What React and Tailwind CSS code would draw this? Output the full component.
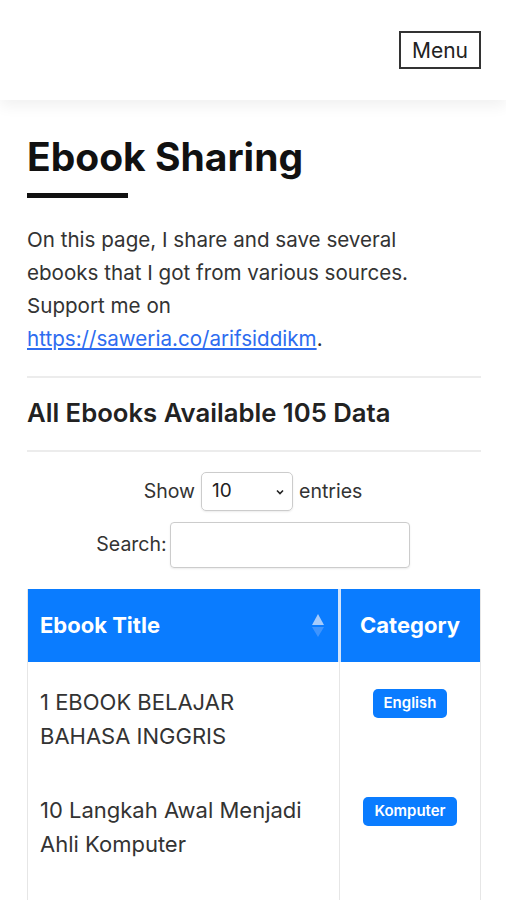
import React from "react";

const books = [
  { title: "1 EBOOK BELAJAR BAHASA INGGRIS", category: "English" },
  { title: "10 Langkah Awal Menjadi Ahli Komputer", category: "Komputer" },
];

const App = () => {
  return (
    <div className="h-screen overflow-hidden flex flex-col bg-white text-[#222] font-['Inter','Liberation_Sans',sans-serif]">
      <header className="h-[100px] shrink-0 flex items-center justify-end px-[25px] shadow-[0_6px_14px_rgba(0,0,0,0.06)]">
        <button className="border-2 border-[#333] px-[11px] h-[38px] text-[21px] text-[#222] leading-none">
          Menu
        </button>
      </header>

      <main className="flex-1 flex flex-col pl-[27px] pr-[25px] pt-[33px]">
        <h1 className="text-[39px] font-bold text-[#111] leading-[47px]">
          Ebook Sharing
        </h1>
        <div className="w-[101px] h-[5px] bg-[#111] mt-[13px]"></div>

        <p className="mt-[25px] max-w-[430px] text-[20.6px] leading-[33px] text-[#333]">
          On this page, I share and save several ebooks that I got from various
          sources. Support me on{" "}
          <a href="#" className="text-[#2d6cf0] underline">
            https://saweria.co/arifsiddikm
          </a>
          .
        </p>

        <hr className="mt-[21px] border-t-2 border-[#ececec]" />
        <h2 className="text-[25.7px] font-semibold text-[#222] pt-[22px] pb-[24px] leading-[26px]">
          All Ebooks Available 105 Data
        </h2>
        <hr className="border-t-2 border-[#ececec]" />

        <div className="flex flex-col items-center mt-[20px] text-[19.5px] text-[#333]">
          <label className="flex items-center gap-[6px] pr-[2px]">
            Show
            <span className="relative flex items-center w-[92px] h-[39px] border border-[#ccc] rounded-[5px] px-[10px] text-[19px] text-[#222] shadow-[0_1px_2px_rgba(0,0,0,0.08)]">
              10
              <svg className="absolute right-[7px]" width="10" height="10" viewBox="0 0 10 10">
                <path d="M2 3.5 L5 6.5 L8 3.5" fill="none" stroke="#222" strokeWidth="1.6" />
              </svg>
            </span>
            entries
          </label>
          <label className="flex items-center gap-[3px] mt-[11px] pr-[2px]">
            Search:
            <span className="block w-[240px] h-[46px] border border-[#ccc] rounded-[4px] shadow-[0_1px_2px_rgba(0,0,0,0.08)]"></span>
          </label>
        </div>

        <div className="mt-[21px] flex-1 flex flex-col border-l border-r border-[#e6e6e6]">
          <div className="flex h-[73px] bg-[#0a7cff]">
            <div className="w-[310px] flex items-center justify-between pl-[12px] pr-[14px]">
              <span className="text-[22px] font-bold text-white">Ebook Title</span>
              <svg width="12" height="28" viewBox="0 0 12 28">
                <path d="M6 2 L12 13 L0 13 Z" fill="#a6cbfb" />
                <path d="M6 25 L12 15 L0 15 Z" fill="#3f94fd" />
              </svg>
            </div>
            <div className="w-[3px] bg-[#d3e4fb]"></div>
            <div className="flex-1 flex items-center pl-[19px] overflow-hidden">
              <span className="text-[22px] font-bold text-white whitespace-nowrap">Category</span>
            </div>
          </div>
          {books.map((b) => (
            <div key={b.title} className="flex">
              <div className="w-[312px] border-r border-[#e6e6e6] pl-[12px] pr-[20px] pt-[23px] pb-[17px] text-[22px] leading-[34px] text-[#333]">
                {b.title}
              </div>
              <div className="flex-1 flex justify-center items-start pt-[27px]">
                <span className="h-[29px] px-[11px] rounded-[5px] bg-[#0a7cff] text-white text-[15px] font-semibold flex items-center">
                  {b.category}
                </span>
              </div>
            </div>
          ))}
          <div className="flex-1 flex">
            <div className="w-[312px] border-r border-[#e6e6e6]"></div>
          </div>
        </div>
      </main>
    </div>
  );
};

export default App;
